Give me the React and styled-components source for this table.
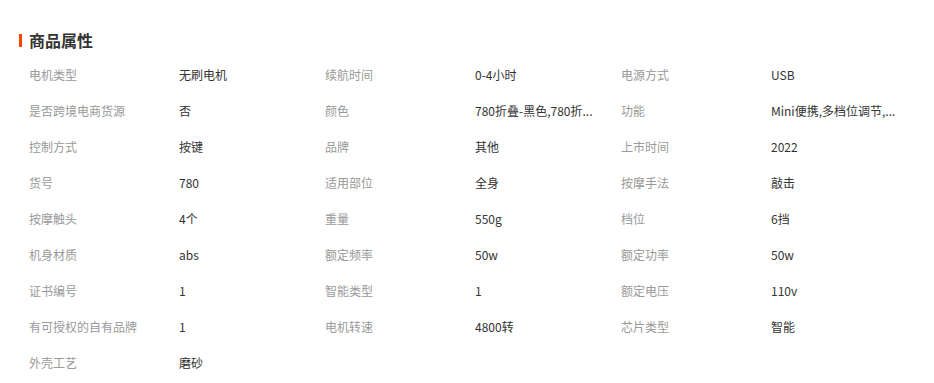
import React from "react";
import styled, { createGlobalStyle } from "styled-components";

const Global = createGlobalStyle`
  html, body { margin: 0; padding: 0; background: #fff; }
  body { font-family: "Microsoft YaHei", "Noto Sans CJK SC", "Noto Sans", sans-serif; }
`;

const Wrap = styled.section`
  padding: 30px 0 0 19px;
`;

const Title = styled.h3`
  display: flex;
  align-items: center;
  gap: 7px;
  margin: 0 0 7px 0;
  height: 20px;
  font-size: 16px;
  font-weight: 700;
  color: #333;
  line-height: 20px;
  &::before {
    content: "";
    display: block;
    width: 3px;
    height: 13px;
    background: #ff4400;
  }
`;

const Grid = styled.div`
  display: grid;
  grid-template-columns: repeat(3, 296px);
  padding-left: 10px;
`;

const Item = styled.div`
  display: flex;
  height: 36px;
  align-items: center;
  font-size: 12px;
  line-height: 36px;
`;

const Label = styled.span`
  width: 150px;
  flex: none;
  color: #999;
  white-space: nowrap;
`;

const Value = styled.span`
  color: #333;
  white-space: nowrap;
`;

const props = [
  ["电机类型", "无刷电机"],
  ["续航时间", "0-4小时"],
  ["电源方式", "USB"],
  ["是否跨境电商货源", "否"],
  ["颜色", "780折叠-黑色,780折..."],
  ["功能", "Mini便携,多档位调节,..."],
  ["控制方式", "按键"],
  ["品牌", "其他"],
  ["上市时间", "2022"],
  ["货号", "780"],
  ["适用部位", "全身"],
  ["按摩手法", "敲击"],
  ["按摩触头", "4个"],
  ["重量", "550g"],
  ["档位", "6挡"],
  ["机身材质", "abs"],
  ["额定频率", "50w"],
  ["额定功率", "50w"],
  ["证书编号", "1"],
  ["智能类型", "1"],
  ["额定电压", "110v"],
  ["有可授权的自有品牌", "1"],
  ["电机转速", "4800转"],
  ["芯片类型", "智能"],
  ["外壳工艺", "磨砂"],
];

export default function App() {
  return (
    <>
      <Global />
      <Wrap>
        <Title>商品属性</Title>
        <Grid>
          {props.map(([k, v]) => (
            <Item key={k}>
              <Label>{k}</Label>
              <Value>{v}</Value>
            </Item>
          ))}
        </Grid>
      </Wrap>
    </>
  );
}
